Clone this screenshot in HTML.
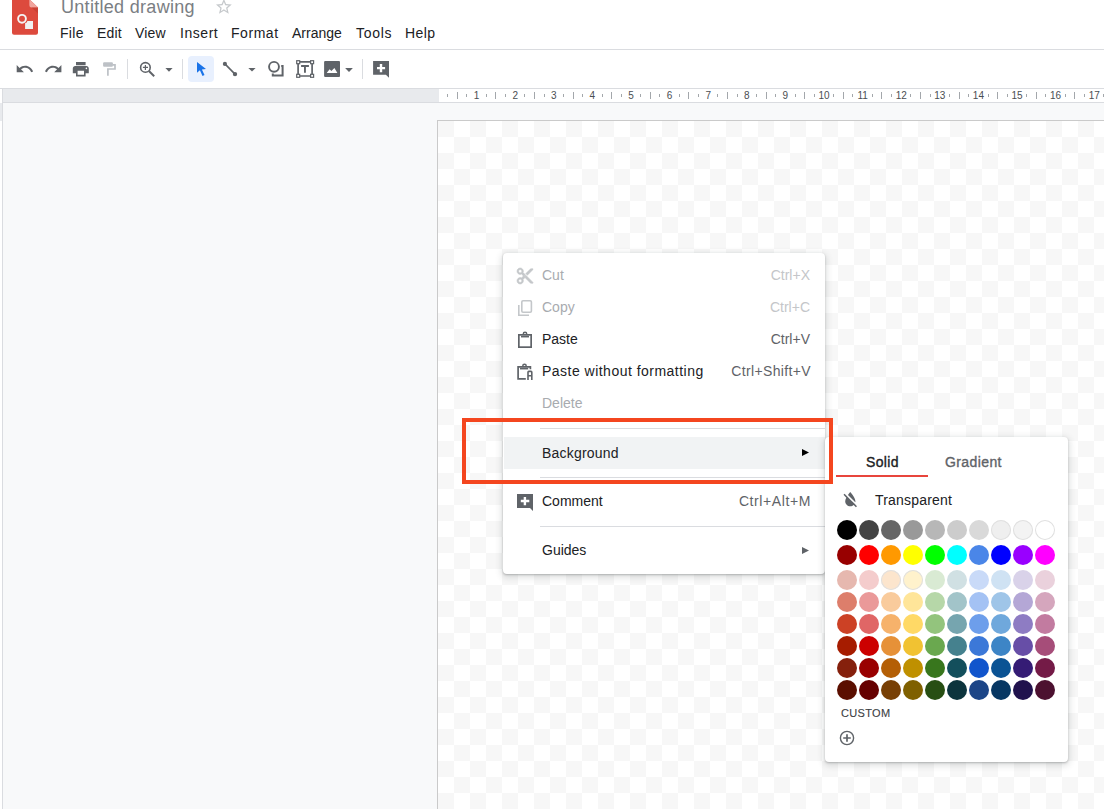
<!DOCTYPE html>
<html><head><meta charset="utf-8">
<style>
*{margin:0;padding:0;box-sizing:border-box}
html,body{width:1104px;height:809px;overflow:hidden;background:#fff;font-family:"Liberation Sans",sans-serif;position:relative}
.a{position:absolute}
.t{position:absolute;white-space:nowrap;line-height:1}
#hdr{left:0;top:0;width:1104px;height:50px;border-bottom:1px solid #dadce0;background:#fff}
.mn{font-size:14px;color:#202124;top:26px}
#tb{left:0;top:50px;width:1104px;height:39px;border-bottom:1px solid #dadce0;background:#fff}
.sep{position:absolute;width:1px;height:20px;top:59px;background:#dadce0}
#rul{left:3px;top:89px;width:1101px;height:14px;background:#e8eaed;border-bottom:1px solid #dadce0}
#canvas{left:3px;top:103px;width:1101px;height:706px;background:#f8f9fa}
#vl{left:2px;top:89px;width:1px;height:720px;background:#dadce0}
.rt{width:1px;background:#a3a7ab}
.rn{width:30px;text-align:center;font-size:10px;color:#4a4e52;top:91px}
#page{left:437px;top:120px;width:700px;height:700px;border-left:1px solid #cacaca;border-top:1px solid #cacaca;
 background:conic-gradient(#fff 25%,#f7f7f7 0 50%,#fff 0 75%,#f7f7f7 0) 0 0/32px 32px}
#menu{left:503px;top:253px;width:322px;height:321px;background:#fff;border-radius:4px;
 box-shadow:0 1px 2px 0 rgba(60,64,67,.3),0 2px 6px 2px rgba(60,64,67,.15)}
.mi{font-size:14px;color:#202124}
.dis{color:#a8abaf}

.sc{font-size:14px;color:#5f6368}
.msep{position:absolute;left:37px;width:285px;height:1px;background:#dadce0}
.sc.sdis{color:#c4c6c9}
#sub{left:825px;top:437px;width:243px;height:325px;background:#fff;border-radius:4px;
 box-shadow:0 1px 2px 0 rgba(60,64,67,.3),0 2px 6px 2px rgba(60,64,67,.15)}
.c{position:absolute;width:20px;height:20px;border-radius:50%}
#red{left:462px;top:418px;width:371px;height:66px;border:4px solid #f4461f}
</style></head><body>
<div id="hdr" class="a"></div>
<!-- logo -->
<svg class="a" style="left:12px;top:0" width="26" height="36" viewBox="0 0 26 36">
 <path d="M2 -3H15L26 7.4V32.7a2 2 0 0 1-2 2H2a2 2 0 0 1-2-2V-1a2 2 0 0 1 2-2z" fill="#dd4a3d"/>
 <path d="M15 -3L26 7.4H19.5Q17.35 7.4 17.35 5.2V-1Z" fill="#f1a59e"/>
 <path d="M19.5 7.4H26V13.4Z" fill="#b8382d" opacity=".5"/>
 <circle cx="10" cy="18.8" r="3.9" fill="none" stroke="#f4f4f4" stroke-width="1.9"/>
 <path d="M15.4 21H21V29H13.1V23.3Q15.2 23.1 15.4 21Z" fill="#f1f1f1"/>
</svg>
<div class="t" style="left:61px;top:-2px;font-size:18px;letter-spacing:.3px;color:#7a7e83">Untitled drawing</div>
<svg class="a" style="left:0;top:0" width="260" height="20"><path transform="translate(214.4,-2.8) scale(0.79)" fill="#c6c9cc" d="M22 9.24l-7.19-.62L12 2 9.19 8.63 2 9.24l5.46 4.73L5.82 21 12 17.27 18.18 21l-1.63-7.03L22 9.24zM12 15.4l-3.76 2.270 1-4.28-3.32-2.88 4.38-.38L12 6.1l1.71 4.04 4.38.38-3.32 2.88 1 4.28L12 15.4z"/></svg>
<div class="t mn" style="left:60px;letter-spacing:.3px">File</div>
<div class="t mn" style="left:97px;letter-spacing:.2px">Edit</div>
<div class="t mn" style="left:135px;letter-spacing:.2px">View</div>
<div class="t mn" style="left:180px;letter-spacing:.55px">Insert</div>
<div class="t mn" style="left:231px;letter-spacing:.55px">Format</div>
<div class="t mn" style="left:292px">Arrange</div>
<div class="t mn" style="left:356px;letter-spacing:.7px">Tools</div>
<div class="t mn" style="left:405px;letter-spacing:.4px">Help</div>

<div id="tb" class="a"></div>
<div class="sep" style="left:127px"></div>
<div class="sep" style="left:182px"></div>
<div class="sep" style="left:362px"></div>
<div class="a" style="left:188px;top:56px;width:26px;height:26px;background:#e8f0fe;border-radius:4px"></div>

<div id="rul" class="a"></div>
<div class="a" style="left:439px;top:89px;width:665px;height:13px;background:#fff"></div>
<!-- ruler -->
<div class="a rt" style="left:447px;top:94px;height:3px"></div><div class="a rt" style="left:457px;top:92px;height:7px"></div><div class="a rt" style="left:466px;top:94px;height:3px"></div><div class="t rn" style="left:461.6px">1</div><div class="a rt" style="left:486px;top:94px;height:3px"></div><div class="a rt" style="left:495px;top:92px;height:7px"></div><div class="a rt" style="left:505px;top:94px;height:3px"></div><div class="t rn" style="left:500.2px">2</div><div class="a rt" style="left:524px;top:94px;height:3px"></div><div class="a rt" style="left:534px;top:92px;height:7px"></div><div class="a rt" style="left:544px;top:94px;height:3px"></div><div class="t rn" style="left:538.8px">3</div><div class="a rt" style="left:563px;top:94px;height:3px"></div><div class="a rt" style="left:573px;top:92px;height:7px"></div><div class="a rt" style="left:582px;top:94px;height:3px"></div><div class="t rn" style="left:577.4px">4</div><div class="a rt" style="left:602px;top:94px;height:3px"></div><div class="a rt" style="left:611px;top:92px;height:7px"></div><div class="a rt" style="left:621px;top:94px;height:3px"></div><div class="t rn" style="left:616.0px">5</div><div class="a rt" style="left:640px;top:94px;height:3px"></div><div class="a rt" style="left:650px;top:92px;height:7px"></div><div class="a rt" style="left:659px;top:94px;height:3px"></div><div class="t rn" style="left:654.6px">6</div><div class="a rt" style="left:679px;top:94px;height:3px"></div><div class="a rt" style="left:688px;top:92px;height:7px"></div><div class="a rt" style="left:698px;top:94px;height:3px"></div><div class="t rn" style="left:693.2px">7</div><div class="a rt" style="left:717px;top:94px;height:3px"></div><div class="a rt" style="left:727px;top:92px;height:7px"></div><div class="a rt" style="left:737px;top:94px;height:3px"></div><div class="t rn" style="left:731.8px">8</div><div class="a rt" style="left:756px;top:94px;height:3px"></div><div class="a rt" style="left:766px;top:92px;height:7px"></div><div class="a rt" style="left:775px;top:94px;height:3px"></div><div class="t rn" style="left:770.4px">9</div><div class="a rt" style="left:795px;top:94px;height:3px"></div><div class="a rt" style="left:804px;top:92px;height:7px"></div><div class="a rt" style="left:814px;top:94px;height:3px"></div><div class="t rn" style="left:809.0px">10</div><div class="a rt" style="left:833px;top:94px;height:3px"></div><div class="a rt" style="left:843px;top:92px;height:7px"></div><div class="a rt" style="left:852px;top:94px;height:3px"></div><div class="t rn" style="left:847.6px">11</div><div class="a rt" style="left:872px;top:94px;height:3px"></div><div class="a rt" style="left:881px;top:92px;height:7px"></div><div class="a rt" style="left:891px;top:94px;height:3px"></div><div class="t rn" style="left:886.2px">12</div><div class="a rt" style="left:910px;top:94px;height:3px"></div><div class="a rt" style="left:920px;top:92px;height:7px"></div><div class="a rt" style="left:930px;top:94px;height:3px"></div><div class="t rn" style="left:924.8px">13</div><div class="a rt" style="left:949px;top:94px;height:3px"></div><div class="a rt" style="left:959px;top:92px;height:7px"></div><div class="a rt" style="left:968px;top:94px;height:3px"></div><div class="t rn" style="left:963.4px">14</div><div class="a rt" style="left:988px;top:94px;height:3px"></div><div class="a rt" style="left:997px;top:92px;height:7px"></div><div class="a rt" style="left:1007px;top:94px;height:3px"></div><div class="t rn" style="left:1002.0px">15</div><div class="a rt" style="left:1026px;top:94px;height:3px"></div><div class="a rt" style="left:1036px;top:92px;height:7px"></div><div class="a rt" style="left:1045px;top:94px;height:3px"></div><div class="t rn" style="left:1040.6px">16</div><div class="a rt" style="left:1065px;top:94px;height:3px"></div><div class="a rt" style="left:1074px;top:92px;height:7px"></div><div class="a rt" style="left:1084px;top:94px;height:3px"></div><div class="t rn" style="left:1079.2px">17</div><div class="a rt" style="left:1103px;top:94px;height:3px"></div><div class="a rt" style="left:1113px;top:92px;height:7px"></div><div class="a rt" style="left:1123px;top:94px;height:3px"></div>
<div id="canvas" class="a"></div>
<div id="vl" class="a"></div>
<div class="a" style="left:0;top:103px;width:2px;height:18px;background:#e8eaed"></div>
<div id="page" class="a"></div>


<div id="menu" class="a"></div>
<div class="a" style="left:504px;top:437px;width:321px;height:32px;background:#f1f3f4"></div>
<div class="msep" style="left:540px;top:428px"></div>
<div class="msep" style="left:540px;top:477px"></div>
<div class="msep" style="left:540px;top:526px"></div>
<div class="t mi dis" style="left:542px;top:268px">Cut</div>
<div class="t mi dis" style="left:542px;top:300px">Copy</div>
<div class="t mi" style="left:542px;top:332px">Paste</div>
<div class="t mi" style="left:542px;top:364px;letter-spacing:.48px">Paste without formatting</div>
<div class="t mi dis" style="left:542px;top:396px">Delete</div>
<div class="t mi" style="left:542px;top:446px;letter-spacing:.2px">Background</div>
<div class="t mi" style="left:542px;top:494px">Comment</div>
<div class="t mi" style="left:542px;top:543px">Guides</div>
<div class="t sc sdis" style="right:294px;top:268px">Ctrl+X</div>
<div class="t sc sdis" style="right:294px;top:300px">Ctrl+C</div>
<div class="t sc" style="right:294px;top:332px">Ctrl+V</div>
<div class="t sc" style="right:293px;top:364px;letter-spacing:.35px">Ctrl+Shift+V</div>
<div class="t sc" style="right:293px;top:494px;letter-spacing:.6px">Ctrl+Alt+M</div>


<div id="sub" class="a"></div>
<div class="t" style="left:866px;top:455px;font-size:14px;color:#202124;-webkit-text-stroke:.35px #202124;letter-spacing:.35px">Solid</div>
<div class="t" style="left:945px;top:455px;font-size:14px;color:#5f6368;-webkit-text-stroke:.35px #5f6368;letter-spacing:.4px">Gradient</div>
<div class="a" style="left:836px;top:475px;width:92px;height:2px;background:#e8453c"></div>
<div class="t mi" style="left:875px;top:493px;letter-spacing:.2px">Transparent</div>
<div class="t" style="left:841px;top:708px;font-size:11px;color:#3c4043;letter-spacing:.32px;-webkit-text-stroke:.1px #3c4043">CUSTOM</div>
<div class="c" style="left:837px;top:520px;background:#000000;"></div><div class="c" style="left:859px;top:520px;background:#434343;"></div><div class="c" style="left:881px;top:520px;background:#666666;"></div><div class="c" style="left:903px;top:520px;background:#999999;"></div><div class="c" style="left:925px;top:520px;background:#b7b7b7;"></div><div class="c" style="left:947px;top:520px;background:#cccccc;"></div><div class="c" style="left:969px;top:520px;background:#d9d9d9;"></div><div class="c" style="left:991px;top:520px;background:#efefef;box-shadow:inset 0 0 0 1px #e0e0e0;"></div><div class="c" style="left:1013px;top:520px;background:#f3f3f3;box-shadow:inset 0 0 0 1px #e0e0e0;"></div><div class="c" style="left:1035px;top:520px;background:#ffffff;box-shadow:inset 0 0 0 1px #e0e0e0;"></div><div class="c" style="left:837px;top:545px;background:#980000;"></div><div class="c" style="left:859px;top:545px;background:#ff0000;"></div><div class="c" style="left:881px;top:545px;background:#ff9900;"></div><div class="c" style="left:903px;top:545px;background:#ffff00;"></div><div class="c" style="left:925px;top:545px;background:#00ff00;"></div><div class="c" style="left:947px;top:545px;background:#00ffff;"></div><div class="c" style="left:969px;top:545px;background:#4a86e8;"></div><div class="c" style="left:991px;top:545px;background:#0000ff;"></div><div class="c" style="left:1013px;top:545px;background:#9900ff;"></div><div class="c" style="left:1035px;top:545px;background:#ff00ff;"></div><div class="c" style="left:837px;top:570px;background:#e6b8af;"></div><div class="c" style="left:859px;top:570px;background:#f4cccc;"></div><div class="c" style="left:881px;top:570px;background:#fce5cd;box-shadow:inset 0 0 0 1px #e0e0e0;"></div><div class="c" style="left:903px;top:570px;background:#fff2cc;box-shadow:inset 0 0 0 1px #e0e0e0;"></div><div class="c" style="left:925px;top:570px;background:#d9ead3;"></div><div class="c" style="left:947px;top:570px;background:#d0e0e3;"></div><div class="c" style="left:969px;top:570px;background:#c9daf8;"></div><div class="c" style="left:991px;top:570px;background:#cfe2f3;"></div><div class="c" style="left:1013px;top:570px;background:#d9d2e9;"></div><div class="c" style="left:1035px;top:570px;background:#ead1dc;"></div><div class="c" style="left:837px;top:592px;background:#dd7e6b;"></div><div class="c" style="left:859px;top:592px;background:#ea9999;"></div><div class="c" style="left:881px;top:592px;background:#f9cb9c;"></div><div class="c" style="left:903px;top:592px;background:#ffe599;"></div><div class="c" style="left:925px;top:592px;background:#b6d7a8;"></div><div class="c" style="left:947px;top:592px;background:#a2c4c9;"></div><div class="c" style="left:969px;top:592px;background:#a4c2f4;"></div><div class="c" style="left:991px;top:592px;background:#9fc5e8;"></div><div class="c" style="left:1013px;top:592px;background:#b4a7d6;"></div><div class="c" style="left:1035px;top:592px;background:#d5a6bd;"></div><div class="c" style="left:837px;top:614px;background:#cc4125;"></div><div class="c" style="left:859px;top:614px;background:#e06666;"></div><div class="c" style="left:881px;top:614px;background:#f6b26b;"></div><div class="c" style="left:903px;top:614px;background:#ffd966;"></div><div class="c" style="left:925px;top:614px;background:#93c47d;"></div><div class="c" style="left:947px;top:614px;background:#76a5af;"></div><div class="c" style="left:969px;top:614px;background:#6d9eeb;"></div><div class="c" style="left:991px;top:614px;background:#6fa8dc;"></div><div class="c" style="left:1013px;top:614px;background:#8e7cc3;"></div><div class="c" style="left:1035px;top:614px;background:#c27ba0;"></div><div class="c" style="left:837px;top:636px;background:#a61c00;"></div><div class="c" style="left:859px;top:636px;background:#cc0000;"></div><div class="c" style="left:881px;top:636px;background:#e69138;"></div><div class="c" style="left:903px;top:636px;background:#f1c232;"></div><div class="c" style="left:925px;top:636px;background:#6aa84f;"></div><div class="c" style="left:947px;top:636px;background:#45818e;"></div><div class="c" style="left:969px;top:636px;background:#3c78d8;"></div><div class="c" style="left:991px;top:636px;background:#3d85c6;"></div><div class="c" style="left:1013px;top:636px;background:#674ea7;"></div><div class="c" style="left:1035px;top:636px;background:#a64d79;"></div><div class="c" style="left:837px;top:658px;background:#85200c;"></div><div class="c" style="left:859px;top:658px;background:#990000;"></div><div class="c" style="left:881px;top:658px;background:#b45f06;"></div><div class="c" style="left:903px;top:658px;background:#bf9000;"></div><div class="c" style="left:925px;top:658px;background:#38761d;"></div><div class="c" style="left:947px;top:658px;background:#134f5c;"></div><div class="c" style="left:969px;top:658px;background:#1155cc;"></div><div class="c" style="left:991px;top:658px;background:#0b5394;"></div><div class="c" style="left:1013px;top:658px;background:#351c75;"></div><div class="c" style="left:1035px;top:658px;background:#741b47;"></div><div class="c" style="left:837px;top:680px;background:#5b0f00;"></div><div class="c" style="left:859px;top:680px;background:#660000;"></div><div class="c" style="left:881px;top:680px;background:#783f04;"></div><div class="c" style="left:903px;top:680px;background:#7f6000;"></div><div class="c" style="left:925px;top:680px;background:#274e13;"></div><div class="c" style="left:947px;top:680px;background:#0c343d;"></div><div class="c" style="left:969px;top:680px;background:#1c4587;"></div><div class="c" style="left:991px;top:680px;background:#073763;"></div><div class="c" style="left:1013px;top:680px;background:#20124d;"></div><div class="c" style="left:1035px;top:680px;background:#4c1130;"></div>


<svg class="a" style="left:0;top:0" width="1104" height="809" viewBox="0 0 1104 809">

<!-- toolbar icons -->
<path transform="translate(15.1,59.4) scale(0.8)" fill="#5f6368" d="M12.5 8c-2.65 0-5.05.99-6.9 2.6L2 7v9h9l-3.62-3.62c1.39-1.16 3.16-1.88 5.12-1.88 3.54 0 6.55 2.31 7.6 5.5l2.37-.78C21.08 11.030 17.15 8 12.5 8z"/>
<path transform="translate(43.8,59.4) scale(0.8)" fill="#5f6368" d="M18.4 10.6C16.55 8.99 14.15 8 11.5 8c-4.65 0-8.58 3.03-9.96 7.22L3.9 16c1.05-3.19 4.05-5.5 7.6-5.5 1.95 0 3.73.72 5.12 1.88L13 16h9V7l-3.6 3.6z"/>
<path transform="translate(71.2,59.6) scale(0.8)" fill="#5f6368" d="M19 8H5c-1.66 0-3 1.34-3 3v6h4v4h12v-4h4v-6c0-1.66-1.34-3-3-3zm-3 11H8v-5h8v5zm3-7c-.55 0-1-.45-1-1s.45-1 1-1 1 .45 1 1-.45 1-1 1zm-1-9H6v4h12V3z"/>
<rect x="103.1" y="62.2" width="9.8" height="4.6" rx="1" fill="#bdc1c6"/>
<path d="M112.5 64.8H115V69H107.9V75.7" fill="none" stroke="#bdc1c6" stroke-width="1.7"/>
<circle cx="145.4" cy="67.4" r="4.8" fill="none" stroke="#5f6368" stroke-width="1.6"/>
<path d="M142.9 67.4H148M145.4 64.9V70" stroke="#5f6368" stroke-width="1.2"/>
<path d="M148.9 71L154.2 76.2" stroke="#5f6368" stroke-width="2"/>
<path d="M165.4 68H172.6L169 71.7Z" fill="#5f6368"/>
<path d="M197 62V72.8L199.9 70.2L202.5 75.9L204.5 75L201.9 69.4L206 69Z" fill="#1a73e8"/>
<path d="M224.9 63.9L235 74.1" stroke="#5f6368" stroke-width="1.6"/>
<circle cx="224.9" cy="63.9" r="2.1" fill="#5f6368"/>
<circle cx="235" cy="74.1" r="2.2" fill="#5f6368"/>
<path d="M248.3 68H255.6L252 71.6Z" fill="#5f6368"/>
<circle cx="274" cy="66.8" r="4.95" fill="none" stroke="#5f6368" stroke-width="1.9"/>
<path d="M281.2 66H282.6V75.6H272.8V73.6" fill="none" stroke="#5f6368" stroke-width="2"/>
<g fill="none" stroke="#5f6368">
 <path d="M298.2 61.9H312.1M298.2 76H312.1M298.1 61.9V76M312.1 61.9V76" stroke-width="1.7"/>
</g>
<g fill="#fff" stroke="#5f6368" stroke-width="1.2">
 <rect x="296.7" y="60.7" width="3" height="3"/>
 <rect x="310.6" y="60.7" width="3" height="3"/>
 <rect x="296.7" y="74.3" width="3" height="3"/>
 <rect x="310.6" y="74.3" width="3" height="3"/>
</g>
<path d="M301.1 65.1H308.9V66.9H305.9V72.8H304V66.9H301.1Z" fill="#5f6368"/>
<rect x="324.1" y="60.9" width="15.9" height="16" rx="1" fill="#5f6368"/>
<path d="M326.7 73.1L329.6 69.2L331.4 71.1L334.4 68.1L337.4 73.1Z" fill="#fff"/>
<path d="M345.1 68H352.9L349 72Z" fill="#5f6368"/>
<path d="M373.1 61.1H389V77.8L385.9 74.7H373.1Z" fill="#5f6368"/>
<path d="M377 67H385.1V69.2H377Z M379.8 64H382.2V72.3H379.8Z" fill="#fff"/>
<!-- menu icons -->
<path transform="translate(515.4,266.4) scale(0.8)" fill="#c4c7ca" stroke="#c4c7ca" stroke-width=".7" d="M9.64 7.64c.23-.5.36-1.05.36-1.64 0-2.21-1.790-4-4-4S2 3.79 2 6s1.79 4 4 4c.59 0 1.14-.13 1.64-.36L10 12l-2.36 2.36C7.14 14.13 6.59 14 6 14c-2.21 0-4 1.79-4 4s1.79 4 4 4 4-1.79 4-4c0-.59-.13-1.14-.36-1.64L12 14l7 7h3v-1L9.64 7.640zM6 8c-1.1 0-2-.89-2-2s.9-2 2-2 2 .89 2 2-.9 2-2 2zm0 12c-1.1 0-2-.89-2-2s.9-2 2-2 2 .89 2 2-.9 2-2 2zm6-7.5c-.28 0-.5-.22-.5-.5s.22-.5.5-.5.5.22.5.5-.22.5-.5.5zM19 3l-6 6 2 2 7-7V3z"/>
<g fill="none" stroke="#c4c7ca" stroke-width="1.6">
 <rect x="521.8" y="300.8" width="9.6" height="11.4" rx="1.2"/>
 <path d="M518.8 305V315.2H529"/>
</g>
<g fill="none" stroke="#5f6368" stroke-width="1.7">
 <rect x="518.85" y="334.85" width="12.3" height="12.3"/>
 <path d="M521 336.6H529"/>
 <path d="M523.3 334.9V334a1.7 1.7 0 0 1 3.4 0V334.9" stroke-width="1.5"/>
 <path d="M517.3 366.85H530.4V369.2 M525.8 378.85H518.1V366"/>
 <path d="M520 368.6H528.2"/>
 <path d="M522.8 366.9V366a1.7 1.7 0 0 1 3.4 0V366.9" stroke-width="1.5"/>
</g>
<path d="M527.2 380V372.2a1.6 1.6 0 0 1 1.6-1.6H531a1.6 1.6 0 0 1 1.6 1.6V380H531V376.5H528.8V380Z M528.8 372.3V374.9H531V372.3Z" fill="#5f6368"/>
<path d="M517 494H533V511L530 508H517Z" fill="#5f6368"/>
<path d="M520.8 499.8H529.3V502.2H520.8Z M523.7 496.9H526.1V505.2H523.7Z" fill="#fff"/>
<!-- arrows -->
<path d="M802 449L809 452.5L802 456Z" fill="#000"/>
<path d="M802 547L809 550.5L802 554Z" fill="#5f6368"/>
<!-- transparent icon -->
<g transform="translate(840.1,489.3) scale(0.85)">
 <path fill="#5f6368" d="M18 14c0-4-6-10.8-6-10.8s-1.33 1.51-2.73 3.52l8.59 8.59c.09-.42.14-.86.14-1.31zm-.88 3.12L12.5 12.5 5.27 5.27 4 6.55l3.32 3.32C6.55 11.32 6 12.79 6 14c0 3.31 2.69 6 6 6 1.52 0 2.9-.57 3.96-1.5l2.63 2.63 1.27-1.27-2.74-2.74z"/>
</g>
<!-- custom plus -->
<circle cx="847" cy="738" r="6.6" fill="none" stroke="#5f6368" stroke-width="1.4"/>
<path d="M843.2 738H850.8M847 734.2V741.8" stroke="#5f6368" stroke-width="1.7"/>
</svg>
<div id="red" class="a"></div>
</body></html>
